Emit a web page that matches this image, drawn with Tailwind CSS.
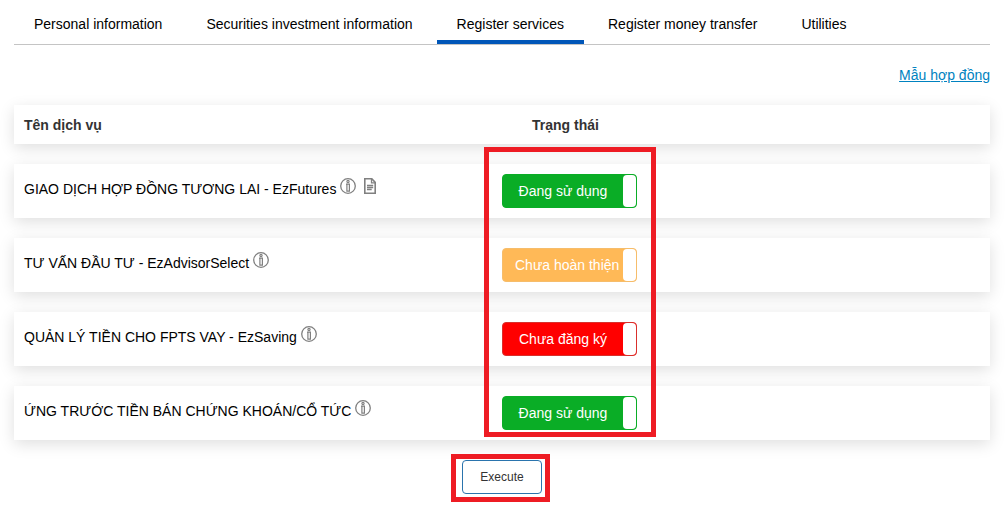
<!DOCTYPE html>
<html lang="vi">

<head>
    <meta charset="utf-8">
    <meta name="viewport" content="width=device-width, initial-scale=1">
    <title>Register services</title>
    <script src="https://cdn.jsdelivr.net/npm/@tailwindcss/browser@4"></script>
</head>

<body class="bg-white pr-[17px] pb-4 pl-[14px] font-['Liberation_Sans',Arial,sans-serif] text-[14px] leading-5 text-black">

    <!-- Icons -->
    <svg class="hidden" aria-hidden="true">
        <symbol id="icon-info" viewBox="0 0 16 16">
            <g fill="none" stroke="#808080">
                <circle cx="8" cy="8" r="7.3" stroke-width="1.3" />
                <circle cx="8" cy="3.5" r="1.1" stroke-width="1.2" />
                <path d="M6 6.2h3.4v6.9H6.9V6.3" stroke-width="1.2" />
            </g>
        </symbol>
        <symbol id="icon-doc" viewBox="0 0 12 16">
            <g fill="none" stroke="#808080" stroke-width="1.6">
                <path d="M.8.8h7l3.4 3.6v10.8H.8z" />
                <path d="M7.5.8v4h3.7" stroke-width="1.3" />
                <path d="M3 7.5h6.2M3 9.5h6.2M3 11.5h4.7" stroke-width="1.4" />
            </g>
        </symbol>
    </svg>

    <!-- Tabs -->
    <nav class="flex gap-1 border-b border-[#c4c4c4] pt-1">
        <a href="#" class="border-b-4 border-transparent px-5 pt-2.5 pb-1.5">Personal information</a>
        <a href="#" class="border-b-4 border-transparent px-5 pt-2.5 pb-1.5">Securities investment information</a>
        <a href="#" class="border-b-4 border-[#0056b8] px-5 pt-2.5 pb-1.5" aria-current="page">Register services</a>
        <a href="#" class="border-b-4 border-transparent px-5 pt-2.5 pb-1.5">Register money transfer</a>
        <a href="#" class="border-b-4 border-transparent px-5 pt-2.5 pb-1.5">Utilities</a>
    </nav>

    <div class="flex justify-end pt-5">
        <a href="#" class="text-[#0082c0] underline">Mẫu hợp đồng</a>
    </div>

    <!-- Services -->
    <main class="relative">
        <table class="w-full table-fixed border-separate border-spacing-x-0 border-spacing-y-5">
            <thead>
                <tr class="h-[39px] bg-white text-left text-[#333] shadow-[0_4px_15px_rgba(0,0,0,0.13)]">
                    <th class="w-1/2 px-2.5 font-bold">Tên dịch vụ</th>
                    <th class="w-1/2 px-[30px] font-bold">Trạng thái</th>
                </tr>
            </thead>
            <tbody>
                <tr class="bg-white shadow-[0_4px_15px_rgba(0,0,0,0.13)]">
                    <td class="px-2.5 pt-3.5 align-top">
                        <div class="flex gap-1">
                            <span class="pt-px">GIAO DỊCH HỢP ĐỒNG TƯƠNG LAI - EzFutures</span>
                            <svg class="size-4"><use href="#icon-info" /></svg>
                            <svg class="ml-1 h-4 w-3"><use href="#icon-doc" /></svg>
                        </div>
                    </td>
                    <td class="py-2.5">
                        <button type="button" class="flex h-[34px] w-[135px] items-center rounded border border-[#0aad26] bg-[#0aad26] text-white">
                            <span class="min-w-0 flex-1 px-3 text-center whitespace-nowrap">Đang sử dụng</span>
                            <span class="h-full w-[13px] shrink-0 rounded bg-white"></span>
                        </button>
                    </td>
                </tr>
                <tr class="bg-white shadow-[0_4px_15px_rgba(0,0,0,0.13)]">
                    <td class="px-2.5 pt-3.5 align-top">
                        <div class="flex gap-1">
                            <span class="pt-px">TƯ VẤN ĐẦU TƯ - EzAdvisorSelect</span>
                            <svg class="size-4"><use href="#icon-info" /></svg>
                        </div>
                    </td>
                    <td class="py-2.5">
                        <button type="button" class="flex h-[34px] w-[135px] items-center rounded border border-[#f6bd6b] bg-[#ffb957] text-white">
                            <span class="min-w-0 flex-1 px-3 text-center whitespace-nowrap">Chưa hoàn thiện</span>
                            <span class="h-full w-[13px] shrink-0 rounded bg-white"></span>
                        </button>
                    </td>
                </tr>
                <tr class="bg-white shadow-[0_4px_15px_rgba(0,0,0,0.13)]">
                    <td class="px-2.5 pt-3.5 align-top">
                        <div class="flex gap-1">
                            <span class="pt-px">QUẢN LÝ TIỀN CHO FPTS VAY - EzSaving</span>
                            <svg class="size-4"><use href="#icon-info" /></svg>
                        </div>
                    </td>
                    <td class="py-2.5">
                        <button type="button" class="flex h-[34px] w-[135px] items-center rounded border border-[#d9302c] bg-[#ff0000] text-white">
                            <span class="min-w-0 flex-1 px-3 text-center whitespace-nowrap">Chưa đăng ký</span>
                            <span class="h-full w-[13px] shrink-0 rounded bg-white"></span>
                        </button>
                    </td>
                </tr>
                <tr class="bg-white shadow-[0_4px_15px_rgba(0,0,0,0.13)]">
                    <td class="px-2.5 pt-3.5 align-top">
                        <div class="flex gap-1">
                            <span class="pt-px">ỨNG TRƯỚC TIỀN BÁN CHỨNG KHOÁN/CỔ TỨC</span>
                            <svg class="size-4"><use href="#icon-info" /></svg>
                        </div>
                    </td>
                    <td class="py-2.5">
                        <button type="button" class="flex h-[34px] w-[135px] items-center rounded border border-[#0aad26] bg-[#0aad26] text-white">
                            <span class="min-w-0 flex-1 px-3 text-center whitespace-nowrap">Đang sử dụng</span>
                            <span class="h-full w-[13px] shrink-0 rounded bg-white"></span>
                        </button>
                    </td>
                </tr>
            </tbody>
        </table>
        <!-- Highlight around the status column -->
        <div class="pointer-events-none absolute top-[62px] bottom-[23px] left-1/2 -ml-[18px] w-[172px] border-5 border-[#ee1c24]"></div>
    </main>

    <div class="flex justify-center">
        <div class="relative">
            <button type="button" class="h-[34px] w-20 rounded border border-[#2a74ad] bg-white text-xs text-[#333]">Execute</button>
            <div class="pointer-events-none absolute -top-1.5 -right-2 -bottom-2 -left-[11px] border-5 border-[#ee1c24]"></div>
        </div>
    </div>

</body>

</html>
